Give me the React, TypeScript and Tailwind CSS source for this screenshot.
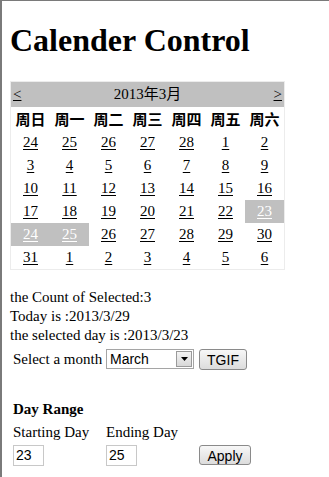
const serif = "font-['Liberation_Serif','Noto_Sans_CJK_SC',serif]";
const sans = "font-['Liberation_Sans',Arial,sans-serif]";

const dayNames = ['周日', '周一', '周二', '周三', '周四', '周五', '周六'];

const weeks: number[][] = [
  [24, 25, 26, 27, 28, 1, 2],
  [3, 4, 5, 6, 7, 8, 9],
  [10, 11, 12, 13, 14, 15, 16],
  [17, 18, 19, 20, 21, 22, 23],
  [24, 25, 26, 27, 28, 29, 30],
  [31, 1, 2, 3, 4, 5, 6],
];

function isSelected(row: number, col: number) {
  return (row === 3 && col === 6) || (row === 4 && (col === 0 || col === 1));
}

function Calendar() {
  return (
    <div className="w-[275px] border border-[#ececec]">
      <div className={`flex h-[25px] items-center justify-between bg-[#c0c0c0] px-[2px] text-[15px] ${serif}`}>
        <span className="underline">&lt;</span>
        <span>2013年3月</span>
        <span className="underline">&gt;</span>
      </div>
      <div className="grid grid-cols-7">
        {dayNames.map((d) => (
          <div
            key={d}
            className="flex h-[24px] items-center justify-center font-['Noto_Sans_CJK_SC',sans-serif] text-[15px] font-semibold"
          >
            {d}
          </div>
        ))}
        {weeks.map((week, r) =>
          week.map((n, c) => {
            const sel = isSelected(r, c);
            return (
              <div
                key={`${r}-${c}`}
                className={`flex h-[23px] items-center justify-center text-[15px] ${serif} ${
                  sel ? 'bg-[#c0c0c0] text-white' : 'text-black'
                }`}
              >
                <span className="underline underline-offset-2">{n}</span>
              </div>
            );
          }),
        )}
      </div>
    </div>
  );
}

export default function App() {
  return (
    <div className={`h-[477px] overflow-hidden border-l-2 border-t border-[#7a7a7a] bg-white pl-[8px] text-black ${serif}`}>
      <h1 className="pt-[19px] text-[32px] font-bold leading-[40px]">Calender Control</h1>
      <div className="mt-[21px]">
        <Calendar />
      </div>

      <div className="mt-[18px] text-[15px] leading-[19px]">
        <div>the Count of Selected:3</div>
        <div>Today is :2013/3/29</div>
        <div>the selected day is :2013/3/23</div>
      </div>

      <div className="mt-[3px] flex items-center pl-[3px]">
        <span className="w-[93px] shrink-0 whitespace-nowrap text-[15px]">Select a month</span>
        <div className={`flex h-[20px] w-[88px] shrink-0 items-center justify-between border border-[#a5a5a5] bg-white pl-[3px] pr-[1px] text-[14px] ${sans}`}>
          <span>March</span>
          <span className="flex h-[16px] w-[16px] items-center justify-center border border-[#9a9a9a] bg-gradient-to-b from-[#f4f4f4] to-[#d8d8d8]">
            <svg width="7" height="4" viewBox="0 0 7 4">
              <path d="M0 0h7L3.5 4z" fill="#000" />
            </svg>
          </span>
        </div>
        <button
          className={`ml-[5px] h-[21px] w-[48px] shrink-0 rounded-[3px] border border-[#8a8a8a] bg-gradient-to-b from-[#f7f7f7] to-[#dcdcdc] text-[14px] ${sans}`}
        >
          TGIF
        </button>
      </div>

      <div className="mt-[28px] pl-[3px]">
        <div className="text-[15px] font-bold leading-[20px]">Day Range</div>
        <div className="mt-[3px] flex text-[15px] leading-[20px]">
          <span className="w-[93px] whitespace-nowrap">Starting Day</span>
          <span className="whitespace-nowrap">Ending Day</span>
        </div>
        <div className="mt-[3px] flex items-center">
          <div className="w-[93px]">
            <div className={`flex h-[21px] w-[31px] items-center border border-[#c8c8c8] pl-[2px] text-[14px] ${sans}`}>23</div>
          </div>
          <div className="w-[93px]">
            <div className={`flex h-[21px] w-[31px] items-center border border-[#c8c8c8] pl-[2px] text-[14px] ${sans}`}>25</div>
          </div>
          <button
            className={`h-[20px] w-[52px] rounded-[3px] border border-[#8a8a8a] bg-gradient-to-b from-[#f7f7f7] to-[#dcdcdc] text-[14px] ${sans}`}
          >
            Apply
          </button>
        </div>
      </div>
    </div>
  );
}
